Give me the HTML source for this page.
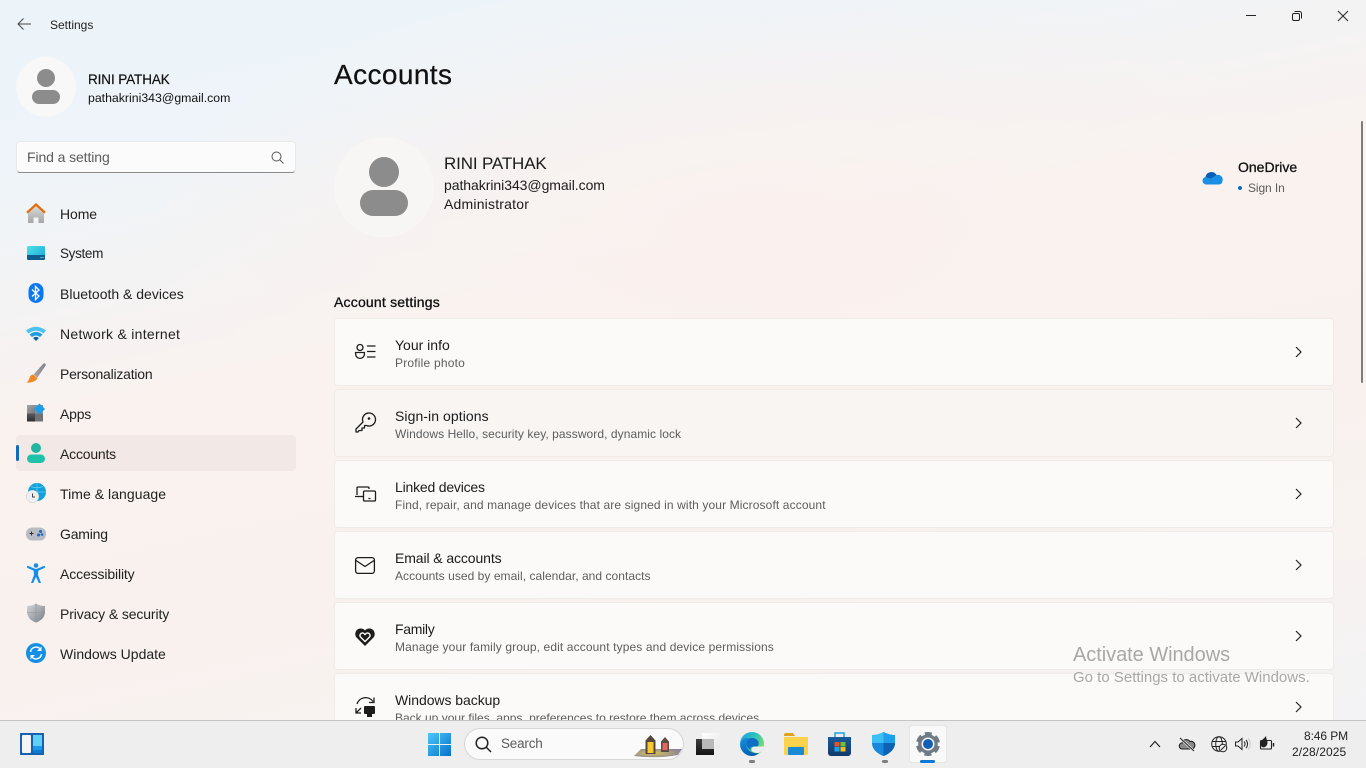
<!DOCTYPE html>
<html><head><meta charset="utf-8"><style>
*{box-sizing:border-box}
html,body{margin:0;padding:0;width:1366px;height:768px;overflow:hidden}
body{font-family:"Liberation Sans",sans-serif;color:#1b1b1b;position:relative;
background:radial-gradient(ellipse 620px 260px at 760px 230px,#faf1ee 0%,rgba(250,241,238,0) 100%),linear-gradient(168deg,#ecf4f9 0%,#eef4f9 16%,#f9f2ef 40%,#f9f1ee 62%,#f8f2f0 78%,#f3f3f5 94%)}
.t{position:absolute;white-space:nowrap;line-height:1}
.n{position:absolute;left:60px;font-size:14px;color:#222;white-space:nowrap;line-height:16px}
svg{position:absolute;overflow:visible}
.card{position:absolute;left:334px;width:1000px;height:68px;background:#fcfaf9;border:1px solid #efebe9;border-radius:4px}
.card.h{background:#f8f5f3}
.c1{position:absolute;left:395px;font-size:14px;color:#1b1b1b;line-height:16px;white-space:nowrap}
.c2{position:absolute;left:395px;font-size:12px;color:#5d5d5d;line-height:14px;white-space:nowrap}
</style></head><body>

<svg style="left:16px;top:17px" width="16" height="14" viewBox="0 0 16 14" fill="none" stroke="#444" stroke-width="1"><path d="M2 7H15M7.500 1.500L2 7l5.500 5.500"/></svg>
<div class="t" style="left:50px;top:19px;font-size:12px;color:#222">Settings</div>

<svg style="left:1246px;top:15px" width="10" height="2"><path d="M0 .5H10" stroke="#222" stroke-width="1"/></svg>
<svg style="left:1292px;top:11px" width="10" height="10" fill="none" stroke="#222" stroke-width="1"><rect x=".5" y="2.500" width="7" height="7" rx="1.500"/><path d="M2.500 .5H7.500a2 2 0 0 1 2 2V7.500"/></svg>
<svg style="left:1338px;top:11px" width="10" height="10" stroke="#222" stroke-width="1"><path d="M0 0L10 10M10 0L0 10"/></svg>

<div style="position:absolute;left:16px;top:57px;width:60px;height:60px;border-radius:50%;background:#f8f8f8"></div>
<svg style="left:31px;top:69px" width="30" height="36" fill="#8c8c8c"><circle cx="15" cy="9" r="9"/><rect x="1" y="21" width="28" height="14" rx="7"/></svg>
<div class="t" style="left:88px;top:73px;font-size:13.500px;color:#111;-webkit-text-stroke:.2px #111;letter-spacing:-.1px">RINI PATHAK</div>
<div class="t" style="left:88px;top:92px;font-size:12.300px;color:#111">pathakrini343@gmail.com</div>

<div style="position:absolute;left:16px;top:141px;width:280px;height:32px;background:#fbfbfb;border:1px solid #e8e8e8;border-bottom:1px solid #8a8a8a;border-radius:4px"></div>
<div class="t" style="left:27px;top:150px;font-size:14px;color:#5c5c5c;letter-spacing:-.1px">Find a setting</div>
<svg style="left:271px;top:151px" width="13" height="13" fill="none" stroke="#555" stroke-width="1"><circle cx="5.500" cy="5.500" r="4.500"/><path d="M9 9L12.500 12.500"/></svg>

<!-- nav icons -->
<svg style="left:26px;top:203px" width="20" height="20" viewBox="0 0 20 20"><defs><linearGradient id="hg" x1="0" y1="0" x2="0" y2="1"><stop offset="0" stop-color="#dcdcdc"/><stop offset="1" stop-color="#a4a4a4"/></linearGradient></defs><path d="M2 9L10 2.500 18 9V20H12.500V14.500H7.500V20H2z" fill="url(#hg)"/><path d="M1 9.700L10 1.500l9 8.200" fill="none" stroke="#e26d0a" stroke-width="2.300"/></svg>
<svg style="left:27px;top:246px" width="18" height="14"><defs><linearGradient id="sg" x1="0" y1="0" x2="1" y2="1"><stop offset="0" stop-color="#4fe0ea"/><stop offset="1" stop-color="#17a6d8"/></linearGradient></defs><rect width="18" height="14" rx="1.500" fill="url(#sg)"/><path d="M0 9H18V12.500a1.500 1.500 0 0 1-1.500 1.500H1.500A1.500 1.500 0 0 1 0 12.500z" fill="#0f5c8e"/><path d="M13.500 11.500h1M15.500 11.500h1" stroke="#bfe4f2" stroke-width="1"/></svg>
<svg style="left:28px;top:283px" width="16" height="20" viewBox="0 0 16 20"><rect width="15" height="20" x=".5" rx="7.500" fill="#0a78f0"/><path d="M4 6.500L11 13l-3.500 3.500V3.500L11 7 4 13.500" fill="none" stroke="#fff" stroke-width="1.300"/></svg>
<svg style="left:26px;top:326px" width="20" height="15" viewBox="0 0 20 15"><path d="M0 4.500Q10-3 20 4.500L17.500 7.500Q10 2 2.500 7.500z" fill="#4cc2f1"/><path d="M3.500 8.500Q10 3.500 16.500 8.500L14 11Q10 8 6 11z" fill="#1e9be0"/><path d="M7 12Q10 9.500 13 12L10 15z" fill="#0c5fa8"/></svg>
<svg style="left:26px;top:363px" width="20" height="20" viewBox="0 0 20 20"><defs><linearGradient id="bg1" x1="1" y1="0" x2="0" y2="1"><stop offset="0" stop-color="#7f8188"/><stop offset="1" stop-color="#a8a8ae"/></linearGradient></defs><path d="M19 .5C19.800 1 20 2 19.300 3L11.500 14.500 7.500 11.500 17 1C17.700 .3 18.400 .2 19 .5z" fill="url(#bg1)"/><path d="M7 11.500L11.500 15C10.500 18 6 20 .5 19.500 2.500 18 3 16.500 3.500 15 4 13 5.500 11.500 7 11.500z" fill="#ee8a25"/></svg>
<svg style="left:27px;top:403px" width="18" height="19" viewBox="0 0 18 19"><defs><linearGradient id="a1" x1="0" y1="0" x2="1" y2="1"><stop offset="0" stop-color="#a5a5a8"/><stop offset="1" stop-color="#78787c"/></linearGradient><linearGradient id="a2" x1="0" y1="0" x2="0" y2="1"><stop offset="0" stop-color="#5a5a5e"/><stop offset="1" stop-color="#2e2e32"/></linearGradient></defs><rect y="2" width="8" height="8.500" fill="url(#a1)"/><rect x="8" y="2" width="8" height="8.500" fill="#8f8f93"/><rect y="10.500" width="8" height="8" fill="url(#a2)"/><rect x="8" y="10.500" width="8" height="8" fill="#727277"/><path d="M12.500 .5l5.500 5.500-5.500 5.500L7 6z" fill="#1a9fea"/></svg>

<div style="position:absolute;left:16px;top:435px;width:280px;height:36px;background:#f2e9e6;border-radius:4px"></div>
<div style="position:absolute;left:16px;top:445px;width:3px;height:16px;background:#0f6cbd;border-radius:2px"></div>
<svg style="left:26px;top:443px" width="20" height="20"><circle cx="10" cy="5" r="5" fill="#1fb5a1"/><rect x="1" y="11.500" width="18" height="8.500" rx="4.200" fill="#1fc2a8"/></svg>
<svg style="left:26px;top:483px" width="20" height="20" viewBox="0 0 20 20"><circle cx="11" cy="9" r="9" fill="#12a0dc"/><path d="M11 0V18M2 9H20M5 3.500Q11 6 17 3.500" fill="none" stroke="#5fd0f0" stroke-width=".7"/><circle cx="6.500" cy="13.500" r="6.300" fill="#efefef" stroke="#c8c8c8" stroke-width=".5"/><path d="M6.500 10.500V14H9" fill="none" stroke="#444" stroke-width="1"/></svg>
<svg style="left:26px;top:527px" width="20" height="14" viewBox="0 0 20 14"><rect width="20" height="13" y=".5" rx="6" fill="#b9bcc2"/><path d="M3.500 6.500H7.500M5.500 4.500V8.500" stroke="#333" stroke-width="1"/><circle cx="14.500" cy="4.500" r="1.500" fill="#1669c9"/><circle cx="12.500" cy="8" r="1.500" fill="#1669c9"/><circle cx="16" cy="7.500" r="1.300" fill="#1669c9"/></svg>
<svg style="left:27px;top:563px" width="18" height="21" viewBox="0 0 18 21"><circle cx="9" cy="2.500" r="2.300" fill="#1390e6"/><path d="M1 4L8 7H10L17 4" fill="none" stroke="#1390e6" stroke-width="2.200" stroke-linecap="round"/><path d="M6.500 6.500H11.500L11 12 14 20H11.800L9 14 6.200 20H4L7 12z" fill="#1390e6"/></svg>
<svg style="left:27px;top:603px" width="18" height="20" viewBox="0 0 18 20"><defs><linearGradient id="pg" x1="0" y1="0" x2="1" y2="1"><stop offset="0" stop-color="#d4d6d9"/><stop offset="1" stop-color="#7b8086"/></linearGradient></defs><path d="M9 0.500C12 2.500 15 3 18 3V9C18 14 14 18 9 19.500 4 18 0 14 0 9V3C3 3 6 2.500 9 .5z" fill="url(#pg)"/><path d="M9 .5V19.500M0 9.500H18" stroke="#8d9197" stroke-width=".6"/></svg>
<svg style="left:26px;top:643px" width="20" height="20" viewBox="0 0 20 20"><circle cx="10" cy="10" r="10" fill="#1390e6"/><path d="M4.500 9A5.500 5.500 0 0 1 14.500 6.500M15.500 11A5.500 5.500 0 0 1 5.500 13.500" fill="none" stroke="#fff" stroke-width="1.400"/><path d="M15.500 3.500V8H11zM4.500 16.500V12H9z" fill="#fff"/></svg>

<div class="n" style="top:206px;letter-spacing:-.1px">Home</div>
<div class="n" style="top:246px;font-size:13.500px;letter-spacing:-.33px">System</div>
<div class="n" style="top:286px">Bluetooth &amp; devices</div>
<div class="n" style="top:326px;letter-spacing:.28px">Network &amp; internet</div>
<div class="n" style="top:366px;letter-spacing:-.22px">Personalization</div>
<div class="n" style="top:406px;letter-spacing:-.2px">Apps</div>
<div class="n" style="top:446px;letter-spacing:-.2px">Accounts</div>
<div class="n" style="top:486px;letter-spacing:.05px">Time &amp; language</div>
<div class="n" style="top:526px;letter-spacing:-.2px">Gaming</div>
<div class="n" style="top:566px;letter-spacing:-.13px">Accessibility</div>
<div class="n" style="top:606px;letter-spacing:-.12px">Privacy &amp; security</div>
<div class="n" style="top:646px">Windows Update</div>

<!-- main -->
<div class="t" style="left:334px;top:61px;font-size:28px;color:#111;-webkit-text-stroke:.25px #111;letter-spacing:.4px">Accounts</div>
<div style="position:absolute;left:334px;top:137px;width:100px;height:100px;border-radius:50%;background:#f8f6f5"></div>
<svg style="left:360px;top:157px" width="48" height="60" fill="#8c8c8c"><circle cx="24" cy="15" r="15"/><rect x="0" y="33" width="48" height="26" rx="13"/></svg>
<div class="t" style="left:444px;top:155px;font-size:17px;color:#1b1b1b;letter-spacing:-.15px">RINI PATHAK</div>
<div class="t" style="left:444px;top:178px;font-size:14px;color:#1b1b1b;letter-spacing:-.05px">pathakrini343@gmail.com</div>
<div class="t" style="left:444px;top:197px;font-size:14px;color:#1b1b1b;letter-spacing:.2px">Administrator</div>

<svg style="left:1202px;top:170px" width="21" height="15" viewBox="0 0 21 15"><path d="M4 14.500A3.800 3.800 0 0 1 3.500 7 6 6 0 0 1 14.500 5 4.800 4.800 0 0 1 20.500 11 3.500 3.500 0 0 1 17 14.500z" fill="#1a8fe3"/><path d="M3.500 7A6 6 0 0 1 14.500 5L9 8.500z" fill="#0a5fb4"/></svg>
<div class="t" style="left:1238px;top:160px;font-size:14px;color:#111;-webkit-text-stroke:.3px #111">OneDrive</div>
<div style="position:absolute;left:1238px;top:186px;width:4px;height:4px;border-radius:50%;background:#0f6cbd"></div>
<div class="t" style="left:1248px;top:182px;font-size:12px;color:#5d5d5d;letter-spacing:-.1px">Sign In</div>

<div class="t" style="left:334px;top:295px;font-size:14px;color:#111;-webkit-text-stroke:.3px #111;letter-spacing:.2px">Account settings</div>

<div class="card" style="top:318px"></div>
<div class="card h" style="top:389px"></div>
<div class="card" style="top:460px"></div>
<div class="card" style="top:531px"></div>
<div class="card" style="top:602px"></div>
<div class="card" style="top:673px;height:70px"></div>

<svg style="left:355px;top:344px" width="21" height="15" fill="none" stroke="#1c1c1c" stroke-width="1.300"><circle cx="5" cy="3.500" r="3"/><path d="M.6 8.500H9.400V10a3.800 3.800 0 0 1-8.800 0z"/><path d="M12 2H20.500M12 7.500H20.500M12 13H20.500"/></svg>
<svg style="left:355px;top:413px" width="20" height="20" viewBox="0 0 20 20" fill="none" stroke="#1c1c1c" stroke-width="1.300"><path d="M1 19V16L8 9A6.500 6.500 0 1 1 11.500 12.500L9.500 12.500V15H7V17.500H4L3 19z" stroke-linejoin="round"/><circle cx="14" cy="5.500" r="1.300" fill="#1c1c1c" stroke="none"/></svg>
<svg style="left:355px;top:486px" width="21" height="16" viewBox="0 0 21 16" fill="none" stroke="#1c1c1c" stroke-width="1.300"><path d="M2 9V2a1 1 0 0 1 1-1H13a1 1 0 0 1 1 1V3"/><path d="M0 10.500H8"/><rect x="8.500" y="5" width="12" height="10" rx="1.300"/><path d="M13.500 12.500H15.500"/></svg>
<svg style="left:355px;top:557px" width="20" height="17" fill="none" stroke="#1c1c1c" stroke-width="1.300"><rect x=".6" y=".6" width="18.800" height="15.800" rx="2.500"/><path d="M1 3.500L10 9.500 19 3.500"/></svg>
<svg style="left:355px;top:628px" width="20" height="18" viewBox="0 0 20 18"><path d="M10 18L1.500 9.500C-1 6.500.5 1 5 .5 7 .3 9 1 10 2.500 11 1 13 .3 15 .5 19.500 1 21 6.500 18.500 9.500z" fill="#1c1c1c"/><path d="M10 13.500L5.500 9C4 7 6 4.500 8 5 9 5.300 9.500 6 10 6.500 10.500 6 11 5.300 12 5 14 4.500 16 7 14.500 9z" fill="#1c1c1c" stroke="#fcfaf9" stroke-width="1.400"/></svg>
<svg style="left:355px;top:696px" width="21" height="24" viewBox="0 0 21 24" fill="none" stroke="#1c1c1c" stroke-width="1.300"><path d="M2 8A9 9 0 0 1 18 5.500"/><path d="M19 1.500V6.500H14M1 12V17H6M1 17L6 12"/><rect x="9" y="10" width="11" height="8" rx="1" fill="#1c1c1c" stroke="none"/><rect x="12" y="18" width="5" height="3" fill="#1c1c1c" stroke="none"/></svg>

<div class="c1" style="top:337px">Your info</div><div class="c2" style="top:356px;letter-spacing:.2px">Profile photo</div>
<div class="c1" style="top:408px;letter-spacing:.07px">Sign-in options</div><div class="c2" style="top:427px;letter-spacing:.07px">Windows Hello, security key, password, dynamic lock</div>
<div class="c1" style="top:479px;letter-spacing:-.2px">Linked devices</div><div class="c2" style="top:498px;letter-spacing:.115px">Find, repair, and manage devices that are signed in with your Microsoft account</div>
<div class="c1" style="top:550px;letter-spacing:-.1px">Email &amp; accounts</div><div class="c2" style="top:569px;letter-spacing:.045px">Accounts used by email, calendar, and contacts</div>
<div class="c1" style="top:621px;letter-spacing:-.3px">Family</div><div class="c2" style="top:640px;letter-spacing:.12px">Manage your family group, edit account types and device permissions</div>
<div class="c1" style="top:692px;letter-spacing:-.05px">Windows backup</div><div class="c2" style="top:711px">Back up your files, apps, preferences to restore them across devices</div>

<svg style="left:1295px;top:346px" width="7" height="12" fill="none" stroke="#222" stroke-width="1.200"><path d="M1 1L6 6 1 11"/></svg>
<svg style="left:1295px;top:417px" width="7" height="12" fill="none" stroke="#222" stroke-width="1.200"><path d="M1 1L6 6 1 11"/></svg>
<svg style="left:1295px;top:488px" width="7" height="12" fill="none" stroke="#222" stroke-width="1.200"><path d="M1 1L6 6 1 11"/></svg>
<svg style="left:1295px;top:559px" width="7" height="12" fill="none" stroke="#222" stroke-width="1.200"><path d="M1 1L6 6 1 11"/></svg>
<svg style="left:1295px;top:630px" width="7" height="12" fill="none" stroke="#222" stroke-width="1.200"><path d="M1 1L6 6 1 11"/></svg>
<svg style="left:1295px;top:701px" width="7" height="12" fill="none" stroke="#222" stroke-width="1.200"><path d="M1 1L6 6 1 11"/></svg>

<div style="position:absolute;left:1361px;top:121px;width:2px;height:262px;background:#7d7d7d;border-radius:1px"></div>

<div class="t" style="left:1073px;top:645px;font-size:20px;color:#a9a7a6;letter-spacing:-.05px">Activate Windows</div>
<div class="t" style="left:1073px;top:670px;font-size:15px;color:#a9a7a6">Go to Settings to activate Windows.</div>

<!-- taskbar -->
<div style="position:absolute;left:0;top:720px;width:1366px;height:48px;background:#eeeeee;border-top:1px solid #c4c4c4"></div>
<svg style="left:20px;top:733px" width="24" height="22"><rect width="24" height="22" fill="#1762ae"/><rect x="2" y="2" width="9" height="18" rx="1" fill="#f4f4f4"/><rect x="13" y="2" width="9" height="11" fill="#5fd0f7"/><rect x="13" y="13" width="9" height="4" fill="#1a9ae8"/><rect x="13" y="17" width="9" height="3" fill="#0b7bd4"/></svg>
<svg style="left:428px;top:733px" width="23" height="23"><defs><linearGradient id="wg" x1="0" y1="0" x2="1" y2="1"><stop offset="0" stop-color="#4cc8f8"/><stop offset="1" stop-color="#0670cc"/></linearGradient></defs><path d="M0 0H11V11H0zM12 0H23V11H12zM0 12H11V23H0zM12 12H23V23H12z" fill="url(#wg)"/></svg>
<div style="position:absolute;left:464px;top:728px;width:220px;height:32px;border-radius:16px;background:#fafafa;border:1px solid #d6d6d6"></div>
<svg style="left:475px;top:736px" width="17" height="17" fill="none" stroke="#222" stroke-width="1.500"><circle cx="7" cy="7" r="5.800"/><path d="M11 11L16 16"/></svg>
<div class="t" style="left:501px;top:737px;font-size:13.500px;color:#5c5c5c;letter-spacing:-.2px">Search</div>
<!-- lanterns -->
<svg style="left:634px;top:735px" width="48" height="23" viewBox="0 0 48 23"><defs><radialGradient id="gl" cx=".4" cy=".5" r=".6"><stop offset="0" stop-color="#d8c060"/><stop offset="1" stop-color="#8a8794"/></radialGradient></defs><path d="M0 21L7 14H48L44 20Q22 24 0 21z" fill="url(#gl)"/><path d="M16.500 0L21.500 5.500V19H11.500V5.500z" fill="#54483e"/><rect x="13.500" y="7" width="6" height="11" fill="#f7c933"/><path d="M31 2L35 6.500V17H27V6.500z" fill="#5c4c46"/><rect x="28.500" y="8" width="5" height="7" fill="#e4665c"/></svg>

<!-- task view -->
<svg style="left:696px;top:733px" width="24" height="22"><defs><linearGradient id="tv1" x1="0" y1="0" x2="0" y2="1"><stop offset="0" stop-color="#3e3e3e"/><stop offset="1" stop-color="#141414"/></linearGradient><linearGradient id="tv2" x1="0" y1="0" x2="1" y2="1"><stop offset="0" stop-color="#ffffff"/><stop offset="1" stop-color="#e6e6e6"/></linearGradient></defs><rect x="0" y="6" width="18" height="16" fill="url(#tv1)"/><rect x="6" y="0" width="18" height="16" fill="url(#tv2)"/><rect x="6" y="6" width="12" height="10" fill="#b8b8b8"/></svg>
<!-- edge -->
<svg style="left:740px;top:732px" width="24" height="24" viewBox="0 0 24 24"><defs><linearGradient id="eg" x1="0" y1="0" x2="1" y2=".6"><stop offset="0" stop-color="#1f9fe0"/><stop offset=".55" stop-color="#2fc4b8"/><stop offset="1" stop-color="#7edc6a"/></linearGradient><linearGradient id="eb" x1="0" y1="0" x2=".6" y2="1"><stop offset="0" stop-color="#1590e0"/><stop offset="1" stop-color="#0a5cb0"/></linearGradient></defs><circle cx="12" cy="12" r="12" fill="url(#eg)"/><path d="M.2 12C.6 7.500 5 5 9.500 6.500 7 8 6 11 6.500 14 7.500 19 13 22 19 21 16.500 23 14.500 24 12 24 5 24-.2 18 .2 12z" fill="url(#eb)"/><path d="M24 14.500H15.500C13.500 14.500 11.500 15.500 11.500 17.500 11.500 20 15 21.500 19.500 20.800 22 19 23.500 17 24 14.500z" fill="#eeeeee"/><path d="M9.500 6.500C12 5.500 16 6 18 9 19 10.500 19 13 17.500 14.500H13C11 14.500 10 16 10.500 18 8 16.500 6.500 14 6.500 12 6.500 9.500 8 7.500 9.500 6.500z" fill="#0f6fc6"/></svg>
<div style="position:absolute;left:749px;top:760px;width:6px;height:3px;border-radius:2px;background:#7e7e7e"></div>
<svg style="left:784px;top:733px" width="24" height="22"><path d="M0 2a2 2 0 0 1 2-2H9l2 3H0z" fill="#e0a21a"/><path d="M0 4H24V20a2 2 0 0 1-2 2H2a2 2 0 0 1-2-2z" fill="#fad24c"/><rect x="4" y="14" width="16" height="8" rx="1" fill="#1a8ad4"/></svg>
<svg style="left:828px;top:732px" width="24" height="24"><defs><linearGradient id="sb" x1="0" y1="0" x2="0" y2="1"><stop offset="0" stop-color="#1a5a9c"/><stop offset="1" stop-color="#123a6c"/></linearGradient></defs><path d="M7 6V1H16V6" fill="none" stroke="#1f9ee8" stroke-width="1.500"/><path d="M0 5H23V21a3 3 0 0 1-3 3H3a3 3 0 0 1-3-3z" fill="url(#sb)"/><rect x="6.500" y="10" width="5" height="4.500" fill="#e8512e"/><rect x="12.500" y="10" width="5" height="4.500" fill="#76c029"/><rect x="6.500" y="15" width="5" height="4.500" fill="#1fa3e8"/><rect x="12.500" y="15" width="5" height="4.500" fill="#f7bd17"/></svg>
<svg style="left:872px;top:732px" width="23" height="24"><path d="M11.500 0C15 2 19 3 23 3V11C23 17.500 17 22 11.500 24 6 22 0 17.500 0 11V3C4 3 8 2 11.500 0z" fill="#1788dc"/><path d="M0 3C4 3 8 2 11.500 0V11H0z" fill="#3cc0f4"/><path d="M11.500 0C15 2 19 3 23 3V11H11.500z" fill="#1f9fea"/><path d="M11.500 11H23C23 17.500 17 22 11.500 24z" fill="#0c62b4"/></svg>
<div style="position:absolute;left:882px;top:760px;width:6px;height:3px;border-radius:2px;background:#7e7e7e"></div>
<div style="position:absolute;left:909px;top:725px;width:38px;height:38px;border-radius:4px;background:#f9f9f9;border:1px solid #e6e6e6"></div>
<svg style="left:916px;top:732px" width="24" height="24" viewBox="0 0 24 24" fill="none"><circle cx="12" cy="12" r="9.800" fill="#6f7a84"/><circle cx="12" cy="12" r="10.600" stroke="#6f7a84" stroke-width="2.800" stroke-dasharray="7.100 4" transform="rotate(11 12 12)"/><circle cx="12" cy="12" r="6.500" fill="#f4f5f6"/><circle cx="12" cy="12" r="5" fill="#0f5fb4"/></svg>
<div style="position:absolute;left:920px;top:760px;width:15px;height:3px;border-radius:2px;background:#0a78d7"></div>

<!-- tray -->
<svg style="left:1149px;top:740px" width="12" height="8" fill="none" stroke="#222" stroke-width="1.200"><path d="M1 7L6 1.500 11 7"/></svg>
<svg style="left:1179px;top:737px" width="16" height="15" viewBox="0 0 16 15"><path d="M3.500 12A3 3 0 0 1 3 6 4.500 4.500 0 0 1 11 4.500 3.500 3.500 0 0 1 13 12z" fill="#8a8a8a" stroke="#222" stroke-width="1.100"/><path d="M1 1L15 14" stroke="#eee" stroke-width="2.500"/><path d="M1 1L15 14" stroke="#222" stroke-width="1.100"/></svg>
<svg style="left:1211px;top:736px" width="16" height="16" fill="none" stroke="#222" stroke-width="1"><circle cx="8" cy="8" r="7.300"/><ellipse cx="8" cy="8" rx="3.300" ry="7.300"/><path d="M1 5.500H15M1 10.500H15"/><circle cx="12" cy="12" r="3.800" fill="#eee"/><path d="M10 14L14 10"/></svg>
<svg style="left:1235px;top:737px" width="15" height="14" fill="none" stroke="#222" stroke-width="1"><path d="M.5 5H3L7 1.500V12.500L3 9H.5z"/><path d="M9 4.500A3.500 3.500 0 0 1 9 9.500M11 3A6 6 0 0 1 11 11"/><path d="M13 1.500A8 8 0 0 1 13 12.500" stroke="#c8c8c8"/></svg>
<svg style="left:1259px;top:736px" width="16" height="15" fill="none" stroke="#222" stroke-width="1.100"><rect x="1.500" y="4.500" width="11" height="8.500" rx="1"/><path d="M14.500 7V10.500" stroke-width="1.500"/><path d="M7 0C5 3 1.500 4 1.500 7.500s2.500 4.500 4.500 3.500c1.500-.7 2.500-2.500 2.500-4.500 0-2-1.500-4-1.500-6.500z" fill="#222" stroke="none"/></svg>
<div class="t" style="left:1304px;top:730px;font-size:12px;color:#222;letter-spacing:-.1px">8:46 PM</div>
<div class="t" style="left:1292px;top:746px;font-size:12px;color:#222;letter-spacing:.1px">2/28/2025</div>
</body></html>
